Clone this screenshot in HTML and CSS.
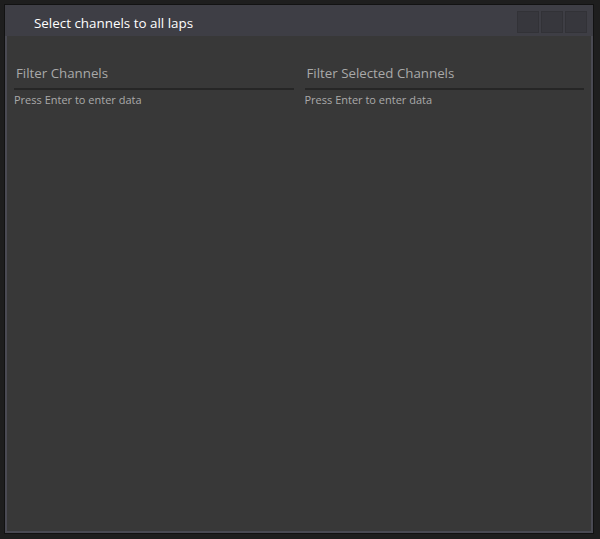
FILE: index.html
```html
<!DOCTYPE html>
<html>
<head>
<meta charset="utf-8">
<link rel="stylesheet" href="styles.css">
</head>
<body>
<div class="window">
  <div class="titlebar">
    <div class="title">Select channels to all laps</div>
    <div class="controls">
      <div class="ctl"></div>
      <div class="ctl"></div>
      <div class="ctl"></div>
    </div>
  </div>
  <div class="content">
    <div class="col">
      <div class="label">Filter Channels</div>
      <div class="rule"></div>
      <div class="hint">Press Enter to enter data</div>
    </div>
    <div class="col">
      <div class="label">Filter Selected Channels</div>
      <div class="rule"></div>
      <div class="hint">Press Enter to enter data</div>
    </div>
  </div>
</div>
</body>
</html>
```
FILE: styles.css
```css
html, body {
  margin: 0;
  padding: 0;
  background: #1e1e1e;
  font-family: "Open Sans", "Noto Sans", sans-serif;
}
.window {
  margin: 4px;
  width: 590px;
  height: 530px;
  box-sizing: border-box;
  border: 1px solid #121212;
  display: flex;
  flex-direction: column;
}
.titlebar {
  height: 31px;
  background: #3e3e45;
  display: flex;
  align-items: center;
  justify-content: space-between;
  flex-shrink: 0;
}
.title {
  color: #ffffff;
  font-size: 13.4px;
  padding-left: 29px;
  margin-top: 4px;
}
.controls {
  display: flex;
  gap: 2px;
  padding-right: 6px;
  margin-top: 3px;
}
.ctl {
  width: 22px;
  height: 22px;
  background: #37373d;
  box-sizing: border-box;
  border: 1px solid #323237;
}
.content {
  flex: 1;
  background: #383838;
  border: 2px solid #4a4a53;
  border-top: none;
  display: flex;
  gap: 11px;
  padding: 25px 7px 0 7px;
}
.col {
  flex: 1;
  display: flex;
  flex-direction: column;
}
.label {
  color: #a9a9a9;
  font-size: 13.3px;
  padding-left: 2px;
  height: 26px;
  line-height: 24px;
}
.rule {
  height: 2px;
  background: #262626;
  margin-top: 1px;
}
.hint {
  color: #aaaaaa;
  font-size: 11px;
  margin-top: 2px;
}
```
